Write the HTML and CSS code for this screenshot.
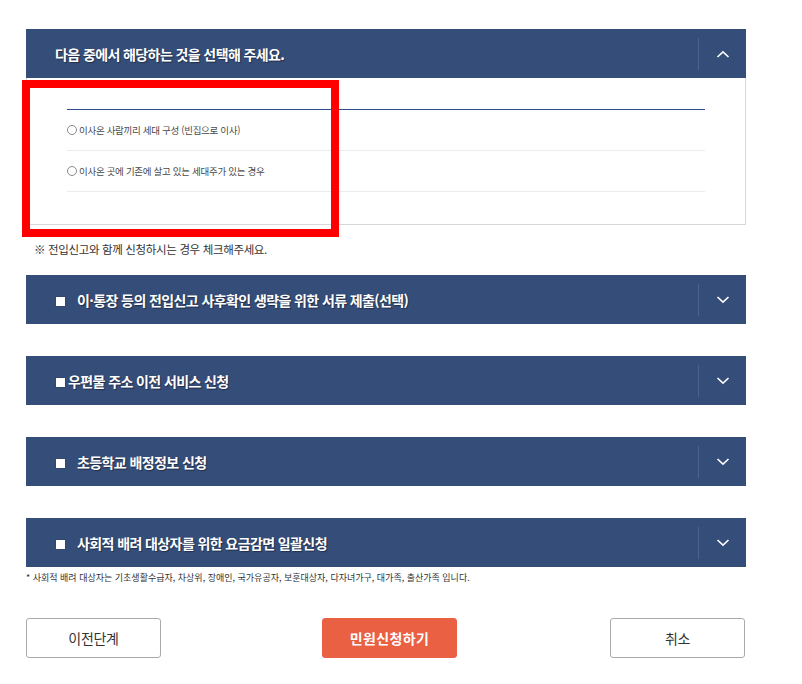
FILE: index.html
```html
<!DOCTYPE html>
<html lang="ko">
<head>
<meta charset="utf-8">
<title>전입신고</title>
<link rel="stylesheet" href="styles.css">
</head>
<body>
<div class="page">
  <section class="panel open">
    <div class="bar">
      <div class="bar-title">다음 중에서 해당하는 것을 선택해 주세요.</div>
      <div class="bar-toggle">
        <svg width="14" height="8" viewBox="0 0 14 8"><polyline points="1.5,7 7,1.8 12.5,7" fill="none" stroke="#fff" stroke-width="1.6"/></svg>
      </div>
    </div>
    <div class="panel-body">
      <ul class="options">
        <li><span class="radio"></span>이사온 사람끼리 세대 구성 (빈집으로 이사)</li>
        <li><span class="radio"></span>이사온 곳에 기존에 살고 있는 세대주가 있는 경우</li>
      </ul>
    </div>
  </section>
  <p class="notice">※ 전입신고와 함께 신청하시는 경우 체크해주세요.</p>

  <section class="panel">
    <div class="bar">
      <div class="bar-title"><span class="check"></span><span class="label gap-l">이·통장 등의 전입신고 사후확인 생략을 위한 서류 제출(선택)</span></div>
      <div class="bar-toggle">
        <svg width="14" height="8" viewBox="0 0 14 8"><polyline points="1.5,1 7,6.2 12.5,1" fill="none" stroke="#fff" stroke-width="1.6"/></svg>
      </div>
    </div>
  </section>

  <section class="panel">
    <div class="bar">
      <div class="bar-title"><span class="check"></span><span class="label gap-s">우편물 주소 이전 서비스 신청</span></div>
      <div class="bar-toggle">
        <svg width="14" height="8" viewBox="0 0 14 8"><polyline points="1.5,1 7,6.2 12.5,1" fill="none" stroke="#fff" stroke-width="1.6"/></svg>
      </div>
    </div>
  </section>

  <section class="panel">
    <div class="bar">
      <div class="bar-title"><span class="check"></span><span class="label gap-l">초등학교 배정정보 신청</span></div>
      <div class="bar-toggle">
        <svg width="14" height="8" viewBox="0 0 14 8"><polyline points="1.5,1 7,6.2 12.5,1" fill="none" stroke="#fff" stroke-width="1.6"/></svg>
      </div>
    </div>
  </section>

  <section class="panel">
    <div class="bar">
      <div class="bar-title"><span class="check"></span><span class="label gap-l">사회적 배려 대상자를 위한 요금감면 일괄신청</span></div>
      <div class="bar-toggle">
        <svg width="14" height="8" viewBox="0 0 14 8"><polyline points="1.5,1 7,6.2 12.5,1" fill="none" stroke="#fff" stroke-width="1.6"/></svg>
      </div>
    </div>
  </section>
  <p class="footnote">* 사회적 배려 대상자는 기초생활수급자, 차상위, 장애인, 국가유공자, 보훈대상자, 다자녀가구, 대가족, 출산가족 입니다.</p>

  <div class="actions">
    <button class="btn">이전단계</button>
    <button class="btn primary">민원신청하기</button>
    <button class="btn">취소</button>
  </div>

  <div class="highlight"></div>
</div>
</body>
</html>
```
FILE: styles.css
```css
* { box-sizing: border-box; }
html, body { margin: 0; padding: 0; background: #fff; }
body {
  font-family: "Noto Sans CJK KR", "Noto Sans", sans-serif;
  color: #333;
}
.page {
  position: relative;
  width: 720px;
  margin-left: 26px;
  padding-top: 29px;
}
.panel { margin-bottom: 32px; }
.panel.open { margin-bottom: 0; }
.bar {
  display: flex;
  align-items: center;
  height: 49px;
  background: #354d79;
  color: #fff;
}
.bar-title {
  flex: 1;
  display: flex;
  align-items: center;
  padding-left: 29px;
  font-size: 14px;
  font-weight: bold;
  letter-spacing: -0.6px;
  text-shadow: 1px 1px 1px rgba(0, 0, 0, 0.4);
  white-space: nowrap;
}
.check {
  width: 9px;
  height: 9px;
  margin-left: 1px;
  margin-top: 4px;
  background: #fff;
  box-shadow: 0 0 1px rgba(0,0,0,0.4);
  flex: none;
}
.gap-l { margin-left: 12px; }
.gap-s { margin-left: 3px; }
.bar-toggle {
  width: 48px;
  height: 32px;
  border-left: 1px solid #4b6390;
  display: flex;
  align-items: center;
  justify-content: center;
}
.panel-body {
  border: 1px solid #d8d8d8;
  border-top: none;
  padding: 31px 40px 32px;
}
.options {
  list-style: none;
  margin: 0;
  padding: 0;
  border-top: 1px solid #2f4f8a;
}
.options li {
  display: flex;
  align-items: center;
  height: 41px;
  border-bottom: 1px solid #ececec;
  font-size: 9.5px;
  letter-spacing: -0.3px;
  color: #4a4a4a;
}
.radio {
  width: 10px;
  height: 10px;
  border: 1px solid #8a8a8a;
  border-radius: 50%;
  margin-right: 2px;
  flex: none;
}
.notice {
  margin: 15px 0 17px 8px;
  font-size: 11.5px;
  line-height: 18px;
  letter-spacing: -0.35px;
  color: #333;
}
.footnote {
  margin: -28px 0 34px 0;
  font-size: 9px;
  line-height: 13px;
  letter-spacing: 0;
  color: #333;
}
.actions {
  display: flex;
  justify-content: space-between;
  padding-right: 1px;
}
.btn {
  width: 135px;
  height: 40px;
  border: 1px solid #aaa;
  border-radius: 3px;
  background: #fff;
  font-family: "Noto Sans CJK KR", "Noto Sans", sans-serif;
  font-size: 14px;
  letter-spacing: -0.3px;
  color: #333;
}
.btn.primary {
  background: #e96042;
  border-color: #e96042;
  color: #fff;
  font-weight: bold;
  letter-spacing: 0.4px;
  margin-left: 8px;
}
.highlight {
  position: absolute;
  left: -4px;
  top: 80px;
  width: 317px;
  height: 157px;
  border: 8px solid #ff0000;
}
```
